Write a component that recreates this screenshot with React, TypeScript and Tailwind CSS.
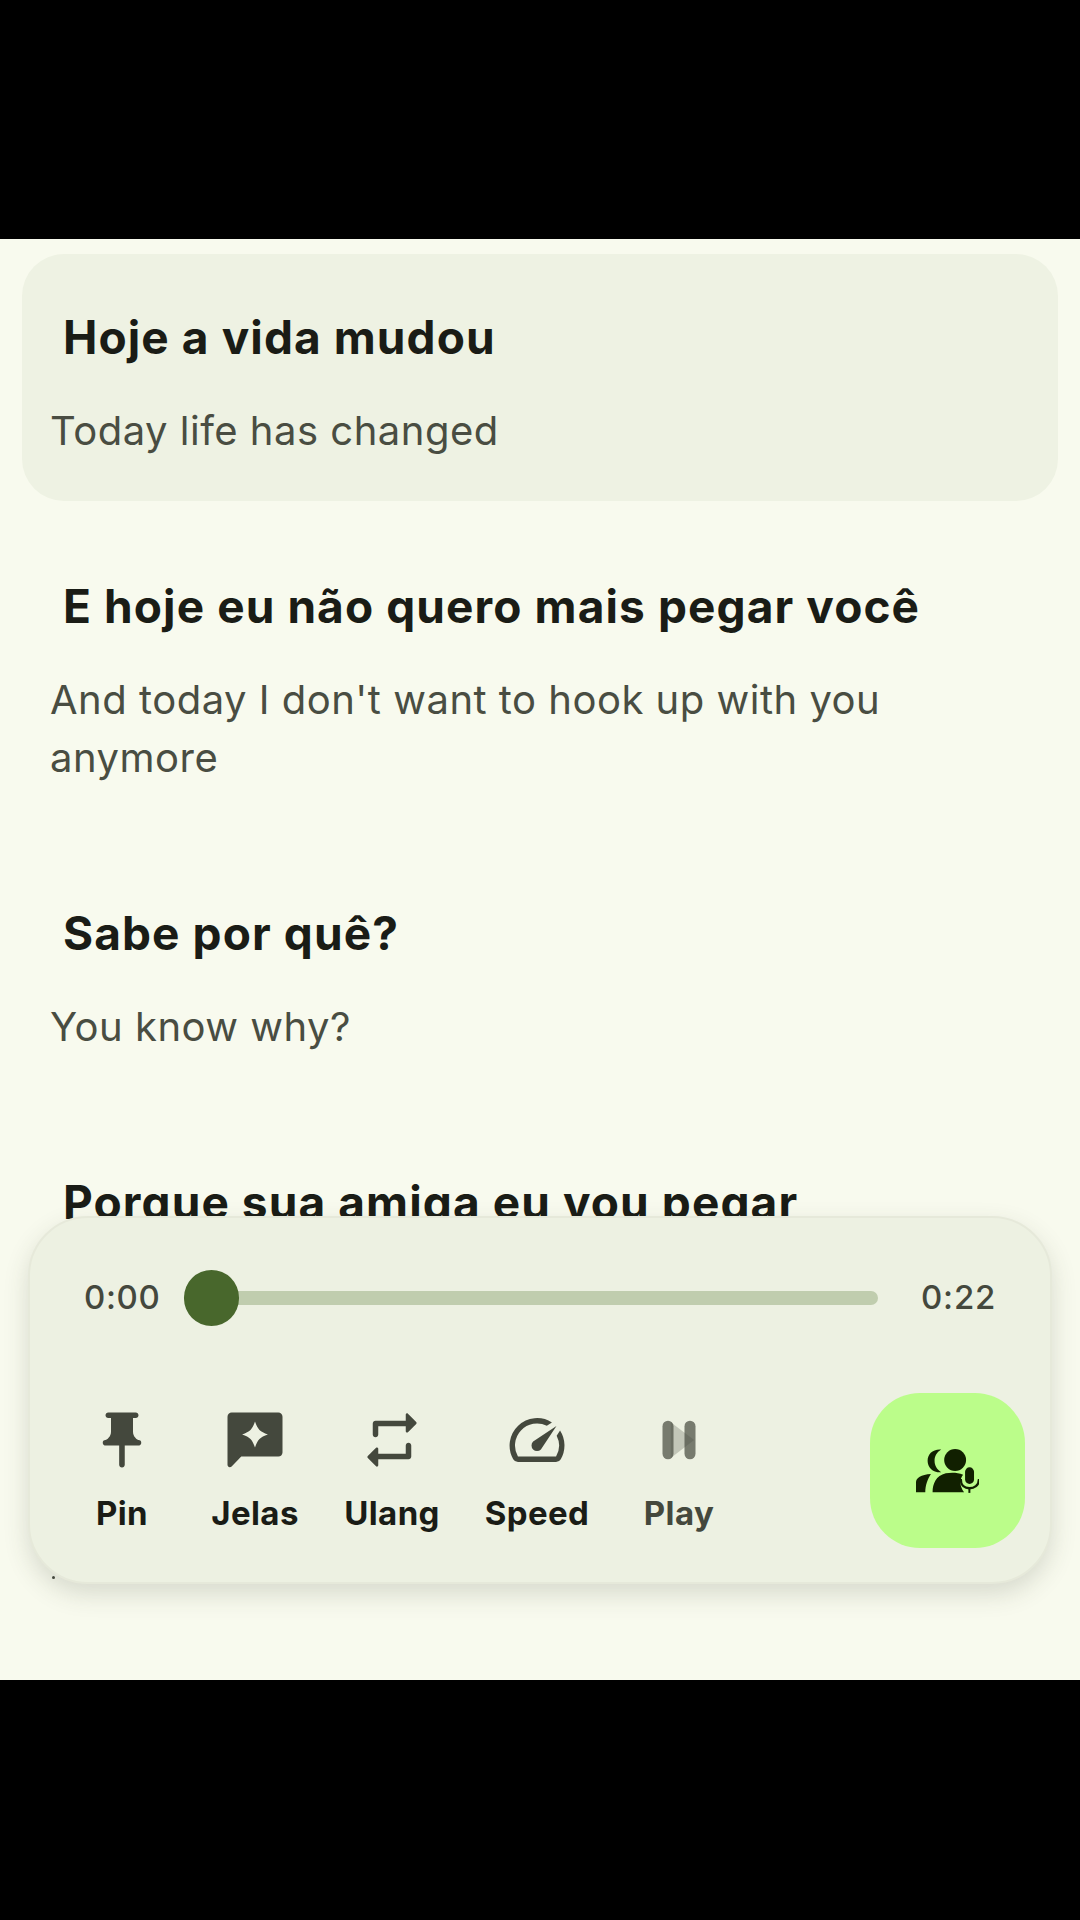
const font = { fontFamily: "Inter, 'Noto Sans', sans-serif" };

const rows = [
  { t: "Hoje a vida mudou", s: ["Today life has changed"], active: true },
  { t: "E hoje eu não quero mais pegar você", s: ["And today I don't want to hook up with you", "anymore"] },
  { t: "Sabe por quê?", s: ["You know why?"] },
  { t: "Porque sua amiga eu vou pegar", s: [] as string[] },
];

function Row({ t, s, active }: { t: string; s: string[]; active?: boolean }) {
  return (
    <div className={`rounded-[42px] pt-[54px] pb-[41px] pl-[28px] pr-[20px] ${active ? "bg-[#eef2e3]" : ""}`}>
      <div className="pl-[13px] text-[46px] leading-[58px] tracking-[1.1px] font-bold text-[#1a1c16] whitespace-nowrap">{t}</div>
      {s.length > 0 && (
        <div className="mt-[36px] text-[40px] leading-[58px] tracking-[0.5px] text-[#494d42] whitespace-nowrap">
          {s.map((l) => (
            <div key={l}>{l}</div>
          ))}
        </div>
      )}
    </div>
  );
}

function Pin() {
  return (
    <svg width="66" height="66" viewBox="0 0 24 24" fill="#44483d">
      <path d="M16 9V4h1c.55 0 1-.45 1-1s-.45-1-1-1H7c-.55 0-1 .45-1 1s.45 1 1 1h1v5c0 1.660-1.340 3-2.400 3.100c-.35 .05-.6 .45-.6 .9s.3 1 .8 1h5.170v7c0 .55 .45 1 1.030 1s1-.45 1-1v-7h5.200c.5 0 .8-.55 .8-1s-.25-.85-.6-.9C17.340 12 16 10.660 16 9z" />
    </svg>
  );
}
function Chat() {
  return (
    <svg width="66" height="66" viewBox="0 0 24 24" fill="#44483d">
      <path
        fillRule="evenodd"
        d="M20.500 2H3.500C2.700 2 2 2.700 2 3.500V21c0 .8 .9 1.200 1.500 .6L7 18h13.500c.8 0 1.500-.7 1.500-1.500V3.500C22 2.700 21.300 2 20.500 2zM12 5.300c1 2.900 1.800 3.700 4.700 4.700c-2.900 1-3.700 1.800-4.700 4.700c-1-2.900-1.800-3.700-4.700-4.700c2.900-1 3.700-1.800 4.700-4.700z"
      />
    </svg>
  );
}
function Repeat() {
  return (
    <svg width="66" height="66" viewBox="0 0 24 24" fill="#44483d">
      <path d="M7 7h10v1.800c0 .4 .5 .7 .8 .35l3-3c.2-.2 .2-.5 0-.7l-3-3c-.3-.3-.8-.05-.8 .35V5H6c-.55 0-1 .45-1 1v4c0 .55 .45 1 1 1s1-.45 1-1V7zm10 10H7v-1.800c0-.4-.5-.7-.8-.35l-3 3c-.2 .2-.2 .5 0 .7l3 3c.3 .3 .8 .05 .8-.35V19h11c.55 0 1-.45 1-1v-4c0-.55-.45-1-1-1s-1 .45-1 1v3z" />
    </svg>
  );
}
function Speed() {
  return (
    <svg width="66" height="66" viewBox="0 0 24 24" fill="#44483d">
      <path d="M20.380 8.570l-1.230 1.850a8 8 0 0 1-.22 7.580H5.070A8 8 0 0 1 15.580 6.850l1.850-1.230A10 10 0 0 0 3.350 19a2 2 0 0 0 1.720 1h13.850a2 2 0 0 0 1.730-1 10 10 0 0 0-.27-10.440z" />
      <path d="M10.590 15.410a2 2 0 0 0 2.830 0l5.660-8.490-8.490 5.660a2 2 0 0 0 0 2.830z" />
    </svg>
  );
}
function PlayPause() {
  return (
    <svg width="66" height="66" viewBox="0 0 24 24">
      <path d="M9 5.500L17.500 12L9 18.500z" fill="#44483d" opacity="0.25" />
      <rect x="6" y="5" width="4" height="14" rx="2" fill="#44483d" opacity="0.7" />
      <rect x="14" y="5" width="4" height="14" rx="2" fill="#44483d" opacity="0.7" />
    </svg>
  );
}
function GroupMic() {
  return (
    <svg width="63" height="44" viewBox="110 85 190 132" fill="#112000">
      <path d="M186 86C160 84 145 100 145 120C145 140 160 156 186 155C172 145 166 134 166 120C166 106 172 95 186 86Z" />
      <circle cx="228" cy="118" r="33" />
      <path d="M110 215V185C110 172 125 162 155 160C145 175 138 195 138 215Z" />
      <path d="M160 215C160 190 170 165 200 158C215 155 235 155 252 162C241 175 241 196 255 215Z" />
      <rect x="258" y="140" width="27" height="50" rx="13.500" />
      <path d="M245 175C245 195 258 203 271 203C285 203 300 195 300 175" fill="none" stroke="#112000" strokeWidth="7" />
      <rect x="268" y="203" width="6" height="14" />
    </svg>
  );
}

const actions = [
  { icon: <Pin />, label: "Pin", cx: "w-[132px]" },
  { icon: <Chat />, label: "Jelas", cx: "w-[134px]" },
  { icon: <Repeat />, label: "Ulang", cx: "w-[140px]" },
  { icon: <Speed />, label: "Speed", cx: "w-[150px]" },
  { icon: <PlayPause />, label: "Play", cx: "w-[134px]", dim: true },
];

export default function App() {
  return (
    <div className="w-[1080px] h-[1920px] bg-black flex flex-col overflow-hidden" style={font}>
      <div className="h-[239px] shrink-0" />
      <main className="relative h-[1441px] shrink-0 bg-[#f8faee] overflow-hidden">
        <div className="flex flex-col gap-[22px] pt-[15px] px-[22px]">
          {rows.map((r) => (
            <Row key={r.t} {...r} />
          ))}
        </div>

        <div className="absolute left-[28px] top-[977px] w-[1024px] h-[368px] rounded-[60px] bg-[#edf1e2] border-2 border-[#e6e9da] shadow-[0_10px_24px_rgba(60,65,45,0.17)] pt-[52px] pl-[54px] pr-[30px]">
          <div className="flex items-center h-[56px]">
            <span className="w-[100px] shrink-0 text-[33px] tracking-[0.6px] font-medium text-[#44483d]">0:00</span>
            <div className="relative flex items-center w-[694px] shrink-0">
              <div className="w-full h-[14px] rounded-full bg-[#c0cdae]" />
              <div className="absolute left-0 w-[55px] h-[56px] rounded-full bg-[#48672c]" />
            </div>
            <span className="ml-[43px] text-[33px] tracking-[0.8px] font-medium text-[#44483d]">0:22</span>
          </div>

          <div className="flex items-start mt-[67px] -ml-[28px]">
            <div className="flex mt-[14px]">
              {actions.map((a) => (
                <div key={a.label} className={`flex flex-col items-center ${a.cx}`}>
                  {a.icon}
                  <span className={`mt-[20px] text-[33px] leading-[40px] tracking-[0.4px] font-bold whitespace-nowrap ${a.dim ? "text-[#44483d]" : "text-[#1a1c16]"}`}>
                    {a.label}
                  </span>
                </div>
              ))}
            </div>
            <div className="ml-[124px] w-[155px] h-[155px] shrink-0 rounded-[50px] bg-[#bbfd8a] flex items-center justify-center">
              <GroupMic />
            </div>
          </div>
        </div>
        <div className="absolute left-[52px] top-[1337px] w-[3px] h-[3px] rounded-full bg-[#44483d]" />
      </main>
    </div>
  );
}
